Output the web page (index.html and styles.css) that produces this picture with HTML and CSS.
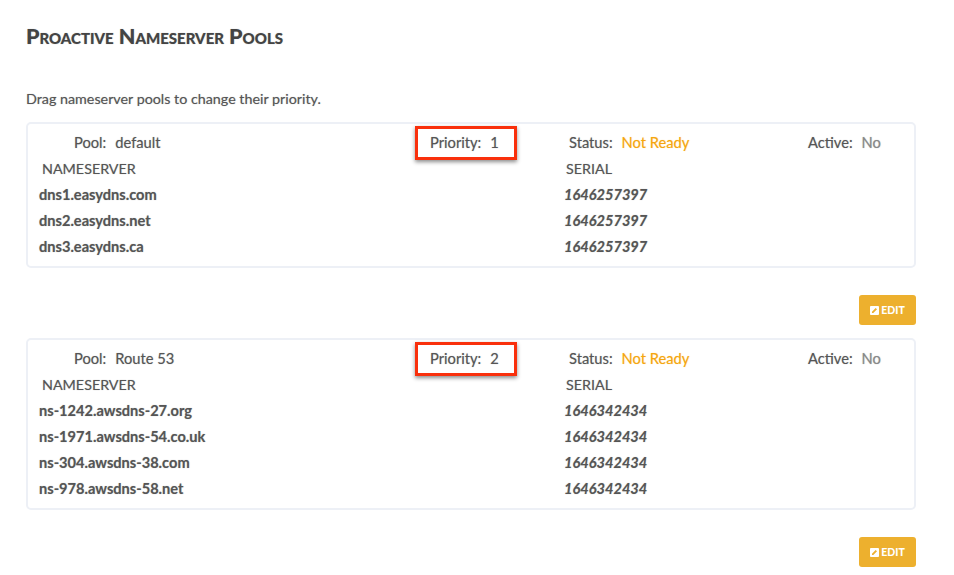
FILE: index.html
```html
<!DOCTYPE html>
<html lang="en">
<head>
<meta charset="utf-8">
<title>Proactive Nameserver Pools</title>
<link rel="stylesheet" href="styles.css">
</head>
<body>
<main class="page">
  <h1 class="title">Proactive Nameserver Pools</h1>
  <p class="hint">Drag nameserver pools to change their priority.</p>

  <section class="pool">
    <div class="meta">
      <div class="meta-pool"><span class="label">Pool:</span><span class="value">default</span></div>
      <div class="meta-priority"><span class="label">Priority:</span><span class="value">1</span><span class="callout"></span></div>
      <div class="meta-status"><span class="label">Status:</span><span class="value warn">Not Ready</span></div>
      <div class="meta-active"><span class="label">Active:</span><span class="value muted">No</span></div>
    </div>
    <div class="row head"><span>NAMESERVER</span><span>SERIAL</span></div>
    <div class="row"><strong>dns1.easydns.com</strong><em>1646257397</em></div>
    <div class="row"><strong>dns2.easydns.net</strong><em>1646257397</em></div>
    <div class="row"><strong>dns3.easydns.ca</strong><em>1646257397</em></div>
  </section>
  <div class="actions">
    <button class="edit" type="button"><svg class="edit-icon" viewBox="0 0 10 10" aria-hidden="true"><path fill-rule="evenodd" d="M1 0h8a1 1 0 0 1 1 1v8a1 1 0 0 1-1 1H1a1 1 0 0 1-1-1V1a1 1 0 0 1 1-1zM6.3 2.2 2.2 6.3V7.8H3.7L7.8 3.7z"/></svg>EDIT</button>
  </div>

  <section class="pool">
    <div class="meta">
      <div class="meta-pool"><span class="label">Pool:</span><span class="value">Route 53</span></div>
      <div class="meta-priority"><span class="label">Priority:</span><span class="value">2</span><span class="callout"></span></div>
      <div class="meta-status"><span class="label">Status:</span><span class="value warn">Not Ready</span></div>
      <div class="meta-active"><span class="label">Active:</span><span class="value muted">No</span></div>
    </div>
    <div class="row head"><span>NAMESERVER</span><span>SERIAL</span></div>
    <div class="row"><strong>ns-1242.awsdns-27.org</strong><em>1646342434</em></div>
    <div class="row"><strong>ns-1971.awsdns-54.co.uk</strong><em>1646342434</em></div>
    <div class="row"><strong>ns-304.awsdns-38.com</strong><em>1646342434</em></div>
    <div class="row"><strong>ns-978.awsdns-58.net</strong><em>1646342434</em></div>
  </section>
  <div class="actions">
    <button class="edit" type="button"><svg class="edit-icon" viewBox="0 0 10 10" aria-hidden="true"><path fill-rule="evenodd" d="M1 0h8a1 1 0 0 1 1 1v8a1 1 0 0 1-1 1H1a1 1 0 0 1-1-1V1a1 1 0 0 1 1-1zM6.3 2.2 2.2 6.3V7.8H3.7L7.8 3.7z"/></svg>EDIT</button>
  </div>
</main>
</body>
</html>
```

FILE: styles.css
```css
* { box-sizing: border-box; }

html, body { margin: 0; height: 100%; overflow: hidden; background: #fff; }

body {
  font-family: Lato, "Open Sans", sans-serif;
  font-size: 14.3px;
  line-height: 26px;
  color: #555;
  text-shadow: 0 0 1px rgba(85, 85, 85, 0.45);
}

.page { width: 890px; margin-left: 26px; padding-top: 21px; }

.title {
  margin: 0;
  height: 30px;
  font-size: 21.5px;
  line-height: 30px;
  font-weight: 900;
  font-variant: small-caps;
  color: #444;
}

.hint { margin: 35px 0 10px; height: 26px; }

.pool {
  padding: 6px 0;
  border: 2px solid #edf0f6;
  border-radius: 5px;
}

.meta {
  display: grid;
  grid-template-columns: 402px 139px 239px 1fr;
  height: 26px;
  font-size: 14.7px;
  line-height: 24px;
}

.meta-pool { padding-left: 46px; }

.meta-priority { position: relative; }

.label { margin-right: 9px; }

.warn { color: #f5a60f; text-shadow: 0 0 1px rgba(245, 166, 15, 0.45); }

.muted { color: #888; }

.callout {
  position: absolute;
  left: -15px;
  top: -4px;
  width: 102px;
  height: 34px;
  border: 3px solid #f9300c;
  box-shadow: 0 2px 4px rgba(0, 0, 0, 0.45);
  pointer-events: none;
}

.row {
  display: grid;
  grid-template-columns: 525px 1fr;
  height: 26px;
  padding-left: 11px;
}

.row strong { font-weight: 700; font-size: 14.6px; }
.row em { font-weight: 700; font-size: 14.6px; }

.row.head span { padding-left: 3px; }
.row.head span + span { padding-left: 2px; }

.actions {
  display: flex;
  justify-content: flex-end;
  padding: 27px 0 13px;
}

.edit {
  display: flex;
  align-items: center;
  justify-content: center;
  gap: 2px;
  width: 57px;
  height: 30px;
  padding: 0;
  border: 0;
  border-radius: 3px;
  background: #edb02e;
  color: #fff;
  font-family: inherit;
  font-size: 10.5px;
  font-weight: 900;
  text-shadow: none;
}

.edit-icon { width: 9px; height: 9px; fill: #fff; }
```
